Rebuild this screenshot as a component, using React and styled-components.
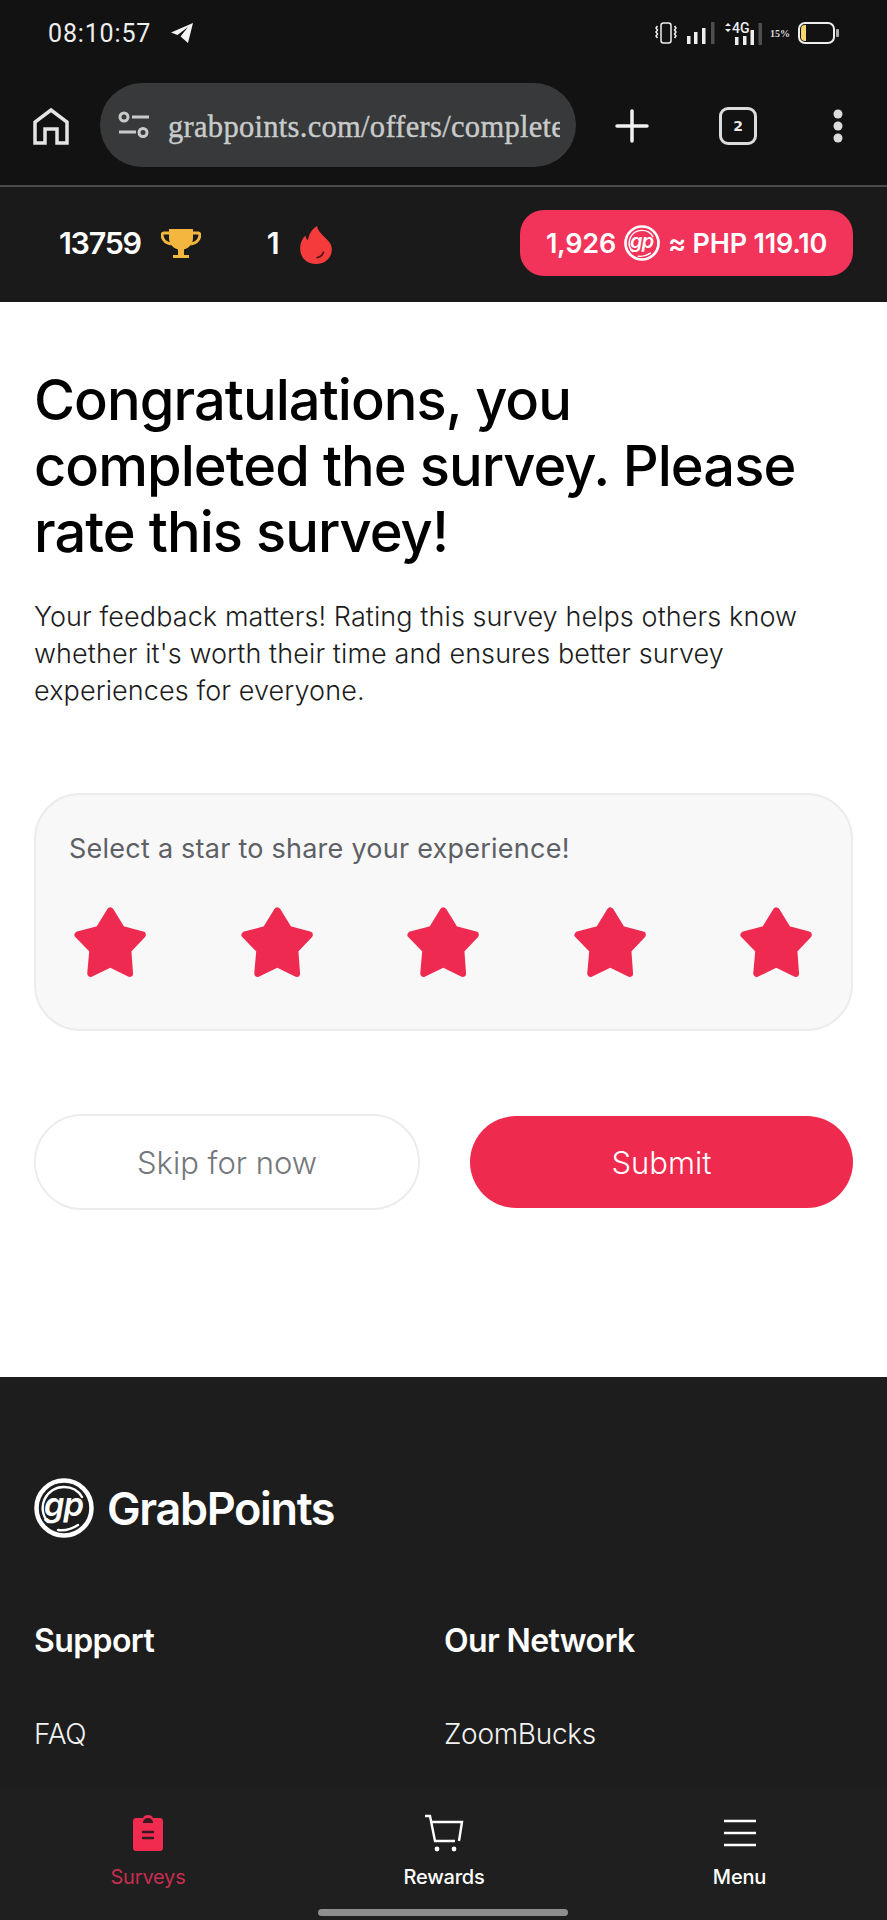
import React from "react";
import styled, { createGlobalStyle } from "styled-components";

const Global = createGlobalStyle`
  html, body { margin: 0; padding: 0; background: #1f1f1f; }
  * { box-sizing: border-box; }
`;
const SANS = `Inter, "Liberation Sans", sans-serif`;

const Page = styled.div`
  width: 887px; height: 1920px; overflow: hidden;
  display: flex; flex-direction: column; font-family: ${SANS};
`;
const StatusBar = styled.div`
  height: 66px; background: #121212; color: #eee;
  display: flex; align-items: center; justify-content: space-between;
  padding: 0 47px 0 48px;
`;
const StatusGroup = styled.div`display: flex; align-items: center;`;
const Clock = styled.span`font: 400 25px Roboto, sans-serif; letter-spacing: 0.85px; margin-right: 19px;`;
const StatusSlot = styled.div`display: flex; margin-left: ${p => p.$left}px;`;
const Toolbar = styled.div`
  height: 121px; background: #121212; border-bottom: 2px solid #4a4a4a;
  display: flex; align-items: flex-start; padding: 17px 0 0 33px;
`;
const UrlPill = styled.div`
  width: 476px; height: 84px; margin-left: 31px; border-radius: 42px;
  background: #37393a; display: flex; align-items: center; padding: 0 0 0 18px;
`;
const UrlClip = styled.div`
  overflow: hidden; width: 392px; margin-left: 18px; white-space: nowrap;
  font: 400 30.5px "Liberation Serif", serif; color: #c9cbcb; letter-spacing: 0.3px;
  -webkit-text-stroke: 0.4px #c9cbcb; padding-top: 5px;
`;
const ToolSlot = styled.div`
  position: relative; top: ${p => p.$top}px; display: flex; align-items: center;
  margin-left: ${p => p.$left}px;
`;
const SiteHeader = styled.header`
  height: 115px; background: #1a1a1a; color: #fff;
  display: flex; align-items: center; padding: 0 34px 0 59px;
`;
const Score = styled.span`
  font-size: 30.5px; font-weight: 600; letter-spacing: -1.3px; margin-top: -4px;
  margin-left: ${p => p.$left || 0}px; margin-right: ${p => p.$gap}px;
`;
const Balance = styled.div`
  margin-left: auto; margin-top: -3px; width: 333px; height: 66px; border-radius: 24px; background: #f2335a;
  display: flex; align-items: center; justify-content: center; gap: 8px;
  font-size: 27px; font-weight: 600; letter-spacing: -0.2px; color: #fff;
`;
const Main = styled.main`
  height: 1075px; background: #fff; padding: 65px 34px 0; color: #000;
`;
const Title = styled.h1`
  margin: 0; font-size: 56px; line-height: 66px; font-weight: 550; letter-spacing: -0.95px;
`;
const Lead = styled.p`
  margin: 33px 0 0; font-size: 27px; line-height: 37px; font-weight: 300; color: #1c1c1c; letter-spacing: 0.09px;
`;
const RatingCard = styled.section`
  margin-top: 84px; height: 238px; border: 2px solid #ececec; border-radius: 46px; background: #f8f8f9;
  padding: 36px 33px 0;
`;
const Prompt = styled.div`font-size: 27px; line-height: 36px; color: #5d6064; letter-spacing: 0.24px;`;
const Stars = styled.div`display: flex; justify-content: space-between; margin-top: 39px; padding-left: 4px; width: 745px;`;
const Actions = styled.div`display: flex; justify-content: space-between; align-items: center; margin-top: 83px;`;
const ActionButton = styled.button`
  width: ${p => (p.$primary ? 383 : 386)}px; height: ${p => (p.$primary ? 92 : 96)}px; border-radius: 48px;
  border: ${p => (p.$primary ? "none" : "2px solid #ececec")};
  background: ${p => (p.$primary ? "#ef2a4f" : "#fff")};
  color: ${p => (p.$primary ? "#fff" : "#74777b")};
  font: 300 31px ${SANS};
`;
const Footer = styled.footer`
  flex: 1; background: #1d1d1d; color: #fff; padding: 101px 34px 0; min-height: 0;
`;
const Brand = styled.div`display: flex; align-items: center; gap: 13px;`;
const BrandName = styled.span`font-size: 45px; font-weight: 600; letter-spacing: -1.35px;`;
const Columns = styled.div`display: grid; grid-template-columns: 410px 1fr; margin-top: 83px;`;
const ColTitle = styled.div`font-size: 32px; font-weight: 600; letter-spacing: -0.6px; line-height: 40px;`;
const ColLink = styled.div`font-size: 28px; font-weight: 300; margin-top: 55px; line-height: 36px; color: #f2f2f2; letter-spacing: -0.3px;`;
const BottomNav = styled.nav`
  height: 135px; background: #1f1f1f; position: relative;
  display: grid; grid-template-columns: 296px 296px 295px; color: #fff;
`;
const NavItem = styled.div`
  display: flex; flex-direction: column; align-items: center; padding-top: 29px;
  color: ${p => (p.$active ? "#c92d4f" : "#fff")};
  font-size: 20px; font-weight: ${p => (p.$active ? 400 : 500)}; letter-spacing: -0.2px;
`;
const NavIcon = styled.div`height: 38px; display: flex; align-items: center; justify-content: center; margin-bottom: 13px;`;
const HomeBar = styled.div`
  position: absolute; left: 318px; bottom: 4px; width: 250px; height: 7px; border-radius: 4px; background: #8e8e8e;
`;

const GpLogo = ({ size, color, ink }) => (
  <svg width={size} height={size} viewBox="0 0 60 60" style={{ flex: "none" }}>
    <circle cx="30" cy="30" r="30" fill={ink} />
    <circle cx="30" cy="30" r="27.500" fill="none" stroke={color} strokeWidth="4.500" />
    <path d="M14 44a21 21 0 0 1 16-35c8 0 14 3 18 10M24 52c7 1 14-1 20-5" fill="none" stroke={color} strokeWidth="2.400" strokeLinecap="round" />
    <text x="29.500" y="38" textAnchor="middle" fontFamily="Inter, sans-serif" fontStyle="italic" fontWeight="600" fontSize="33" letterSpacing="-1" fill={color}>gp</text>
  </svg>
);

const Star = () => (
  <svg width="75" height="73" viewBox="44 68 217 212">
    <path d="M152 82 185 136 245 152 203 196 208 264 152 236 95 264 101 196 58 152 119 136z" fill="#ee2a50" stroke="#ee2a50" strokeWidth="20" strokeLinejoin="round" />
  </svg>
);

const Telegram = () => (
  <svg width="24" height="22" viewBox="0 0 24 22"><path d="M23 1 1 10.500l6.500 2.500L18 5l-7.500 9.500L18 21z" fill="#f4f4f4" /></svg>
);
const Vibrate = () => (
  <svg width="22" height="22" viewBox="0 0 22 22" fill="none" stroke="#eee" strokeWidth="1.500">
    <rect x="6" y="1" width="10" height="20" rx="2.500" />
    <path d="M2.500 4 1 6l1.500 2L1 10l1.500 2L1 14l1.500 2M19.500 4 21 6l-1.500 2L21 10l-1.500 2L21 14l-1.500 2" />
  </svg>
);
const Signal = () => (
  <svg width="28" height="22" viewBox="0 0 28 22">
    <rect x="0" y="14" width="3.500" height="8" fill="#eee" />
    <rect x="7" y="10" width="3.500" height="12" fill="#eee" />
    <rect x="15" y="6" width="3.500" height="16" fill="#eee" />
    <rect x="24" y="0" width="3.500" height="22" fill="#4e4e4e" />
  </svg>
);
const LteSignal = () => (
  <svg width="39" height="24" viewBox="0 0 39 24" overflow="visible">
    <path d="M1 5 4 2l3 3zM1 8l3 3 3-3z" fill="#eee" />
    <text x="8" y="12" fontFamily="Roboto, sans-serif" fontSize="14" fontWeight="500" fill="#eee">4G</text>
    <rect x="11" y="16" width="3.500" height="8" fill="#eee" />
    <rect x="19" y="15" width="3.500" height="9" fill="#eee" />
    <rect x="26.500" y="9" width="3.500" height="15" fill="#eee" />
    <rect x="34.500" y="2" width="3.500" height="22" fill="#4e4e4e" />
  </svg>
);
const Percent = styled.span`
  font: 700 10px "Liberation Serif", serif; color: #ddd; margin-left: 7px; margin-right: 8px;
`;
const Battery = () => (
  <svg width="42" height="22" viewBox="0 0 42 22">
    <rect x="1" y="1" width="35" height="20" rx="6" fill="none" stroke="#eee" strokeWidth="2" />
    <path d="M3 7a4 4 0 0 1 4-4h1v16H7a4 4 0 0 1-4-4z" fill="#f5d670" />
    <rect x="38" y="7" width="3" height="8" rx="1" fill="#aaa" />
  </svg>
);
const HomeIcon = () => (
  <svg width="36" height="38" viewBox="0 0 36 38" fill="none" stroke="#e4e4e4" strokeWidth="3.500">
    <path d="M2 36V15L18 3l16 12v21H24V22H12v14z" />
  </svg>
);
const TuneIcon = () => (
  <svg width="32" height="28" viewBox="0 0 32 28" fill="none" stroke="#c9cbcb" strokeWidth="3">
    <circle cx="6" cy="6" r="4" /><path d="M14 6h17M1 21h17" /><circle cx="25" cy="21.500" r="4" />
  </svg>
);
const PlusIcon = () => (
  <svg width="34" height="34" viewBox="0 0 34 34" stroke="#f2f2f2" strokeWidth="3.500" strokeLinecap="round"><path d="M17 2v30M2 17h30" /></svg>
);
const TabBadge = styled.div`
  width: 38px; height: 38px; border: 3.500px solid #dcdcdc; border-radius: 9px; color: #e8e8e8;
  display: flex; align-items: center; justify-content: center; font: 700 14px "DejaVu Sans", sans-serif;
`;
const DotsIcon = () => (
  <svg width="10" height="34" viewBox="0 0 10 34" fill="#dcdcdc"><circle cx="5" cy="5" r="4.500" /><circle cx="5" cy="17" r="4.500" /><circle cx="5" cy="29" r="4.500" /></svg>
);
const Trophy = () => (
  <svg width="40" height="32" viewBox="0 0 40 32" fill="#f3b73f">
    <path d="M8 0h24v9c0 6-4 10-9 11.500V26h5v3H12v-3h5v-5.500C12 19 8 15 8 9z" />
    <path d="M9 4H2.800C1 4 .8 6 1.400 8 2.200 11.500 5.500 14 10 15M31 4h6.200C39 4 39.200 6 38.600 8c-.8 3.500-4.100 6-8.600 7" fill="none" stroke="#f3b73f" strokeWidth="3" />
  </svg>
);
const Flame = () => (
  <svg width="32" height="38" viewBox="0 0 30 36">
    <path d="M15 36C6 36 0 30 0 21c0-5 2-9 5-12 .3 2 1 3.500 2.500 4.500C8 8 11 3 16 0c.5 4 3 6 6 9.500 4 4 8 7 8 12.500 0 8-6 14-15 14z" fill="#f53b3b" />
    <path d="M16 30c3-.5 5-2 6-5" fill="none" stroke="#5a1414" strokeWidth="1.600" strokeLinecap="round" />
  </svg>
);
const Clipboard = () => (
  <svg width="30" height="36" viewBox="0 0 30 36">
    <path d="M3 3h7c.5-2 2.500-3 5-3s4.500 1 5 3h7c1.700 0 3 1.300 3 3v27c0 1.700-1.300 3-3 3H3c-1.700 0-3-1.300-3-3V6c0-1.700 1.300-3 3-3z" fill="#f12a4f" />
    <path d="M10 8c0-3 2-5 5-5s5 2 5 5z" fill="#3a1a22" />
    <path d="M9 17h12M9 23h12" stroke="#3a1a22" strokeWidth="2.400" />
  </svg>
);
const Cart = () => (
  <svg width="40" height="38" viewBox="0 0 40 38" fill="none" stroke="#fff" strokeWidth="2.400">
    <path d="M1 2h5l5 25h20M8 8h30l-3 19" />
    <circle cx="13" cy="35" r="2.400" fill="#fff" stroke="none" /><circle cx="30" cy="35" r="2.400" fill="#fff" stroke="none" />
  </svg>
);
const Burger = () => (
  <svg width="34" height="28" viewBox="0 0 34 28" stroke="#fff" strokeWidth="2.600"><path d="M1 2h32M1 14h32M1 26h32" /></svg>
);

export default function App() {
  return (
    <Page>
      <Global />
      <StatusBar>
        <StatusGroup><Clock>08:10:57</Clock><Telegram /></StatusGroup>
        <StatusGroup>
          <Vibrate />
          <StatusSlot $left={10}><Signal /></StatusSlot>
          <StatusSlot $left={9}><LteSignal /></StatusSlot>
          <Percent>15%</Percent>
          <Battery />
        </StatusGroup>
      </StatusBar>
      <Toolbar>
        <ToolSlot $left={0} $top={24}><HomeIcon /></ToolSlot>
        <UrlPill>
          <TuneIcon />
          <UrlClip>grabpoints.com/offers/complete</UrlClip>
        </UrlPill>
        <ToolSlot $left={39} $top={26}><PlusIcon /></ToolSlot>
        <ToolSlot $left={70} $top={24}><TabBadge>2</TabBadge></ToolSlot>
        <ToolSlot $left={76} $top={26}><DotsIcon /></ToolSlot>
      </Toolbar>
      <SiteHeader>
        <Score $gap={20}>13759</Score>
        <Trophy />
        <Score $left={66} $gap={22}>1</Score>
        <Flame />
        <Balance>
          <span>1,926</span>
          <GpLogo size={36} color="#fff" ink="#f2335a" />
          <span>≈ PHP 119.10</span>
        </Balance>
      </SiteHeader>
      <Main>
        <Title>Congratulations, you completed the survey. Please rate this survey!</Title>
        <Lead>Your feedback matters! Rating this survey helps others know whether it's worth their time and ensures better survey experiences for everyone.</Lead>
        <RatingCard>
          <Prompt>Select a star to share your experience!</Prompt>
          <Stars>{[0, 1, 2, 3, 4].map(i => <Star key={i} />)}</Stars>
        </RatingCard>
        <Actions>
          <ActionButton>Skip for now</ActionButton>
          <ActionButton $primary>Submit</ActionButton>
        </Actions>
      </Main>
      <Footer>
        <Brand>
          <GpLogo size={60} color="#fff" ink="#1d1d1d" />
          <BrandName>GrabPoints</BrandName>
        </Brand>
        <Columns>
          <div><ColTitle>Support</ColTitle><ColLink>FAQ</ColLink></div>
          <div><ColTitle>Our Network</ColTitle><ColLink>ZoomBucks</ColLink></div>
        </Columns>
      </Footer>
      <BottomNav>
        <NavItem $active><NavIcon><Clipboard /></NavIcon>Surveys</NavItem>
        <NavItem><NavIcon><Cart /></NavIcon>Rewards</NavItem>
        <NavItem><NavIcon><Burger /></NavIcon>Menu</NavItem>
        <HomeBar />
      </BottomNav>
    </Page>
  );
}
